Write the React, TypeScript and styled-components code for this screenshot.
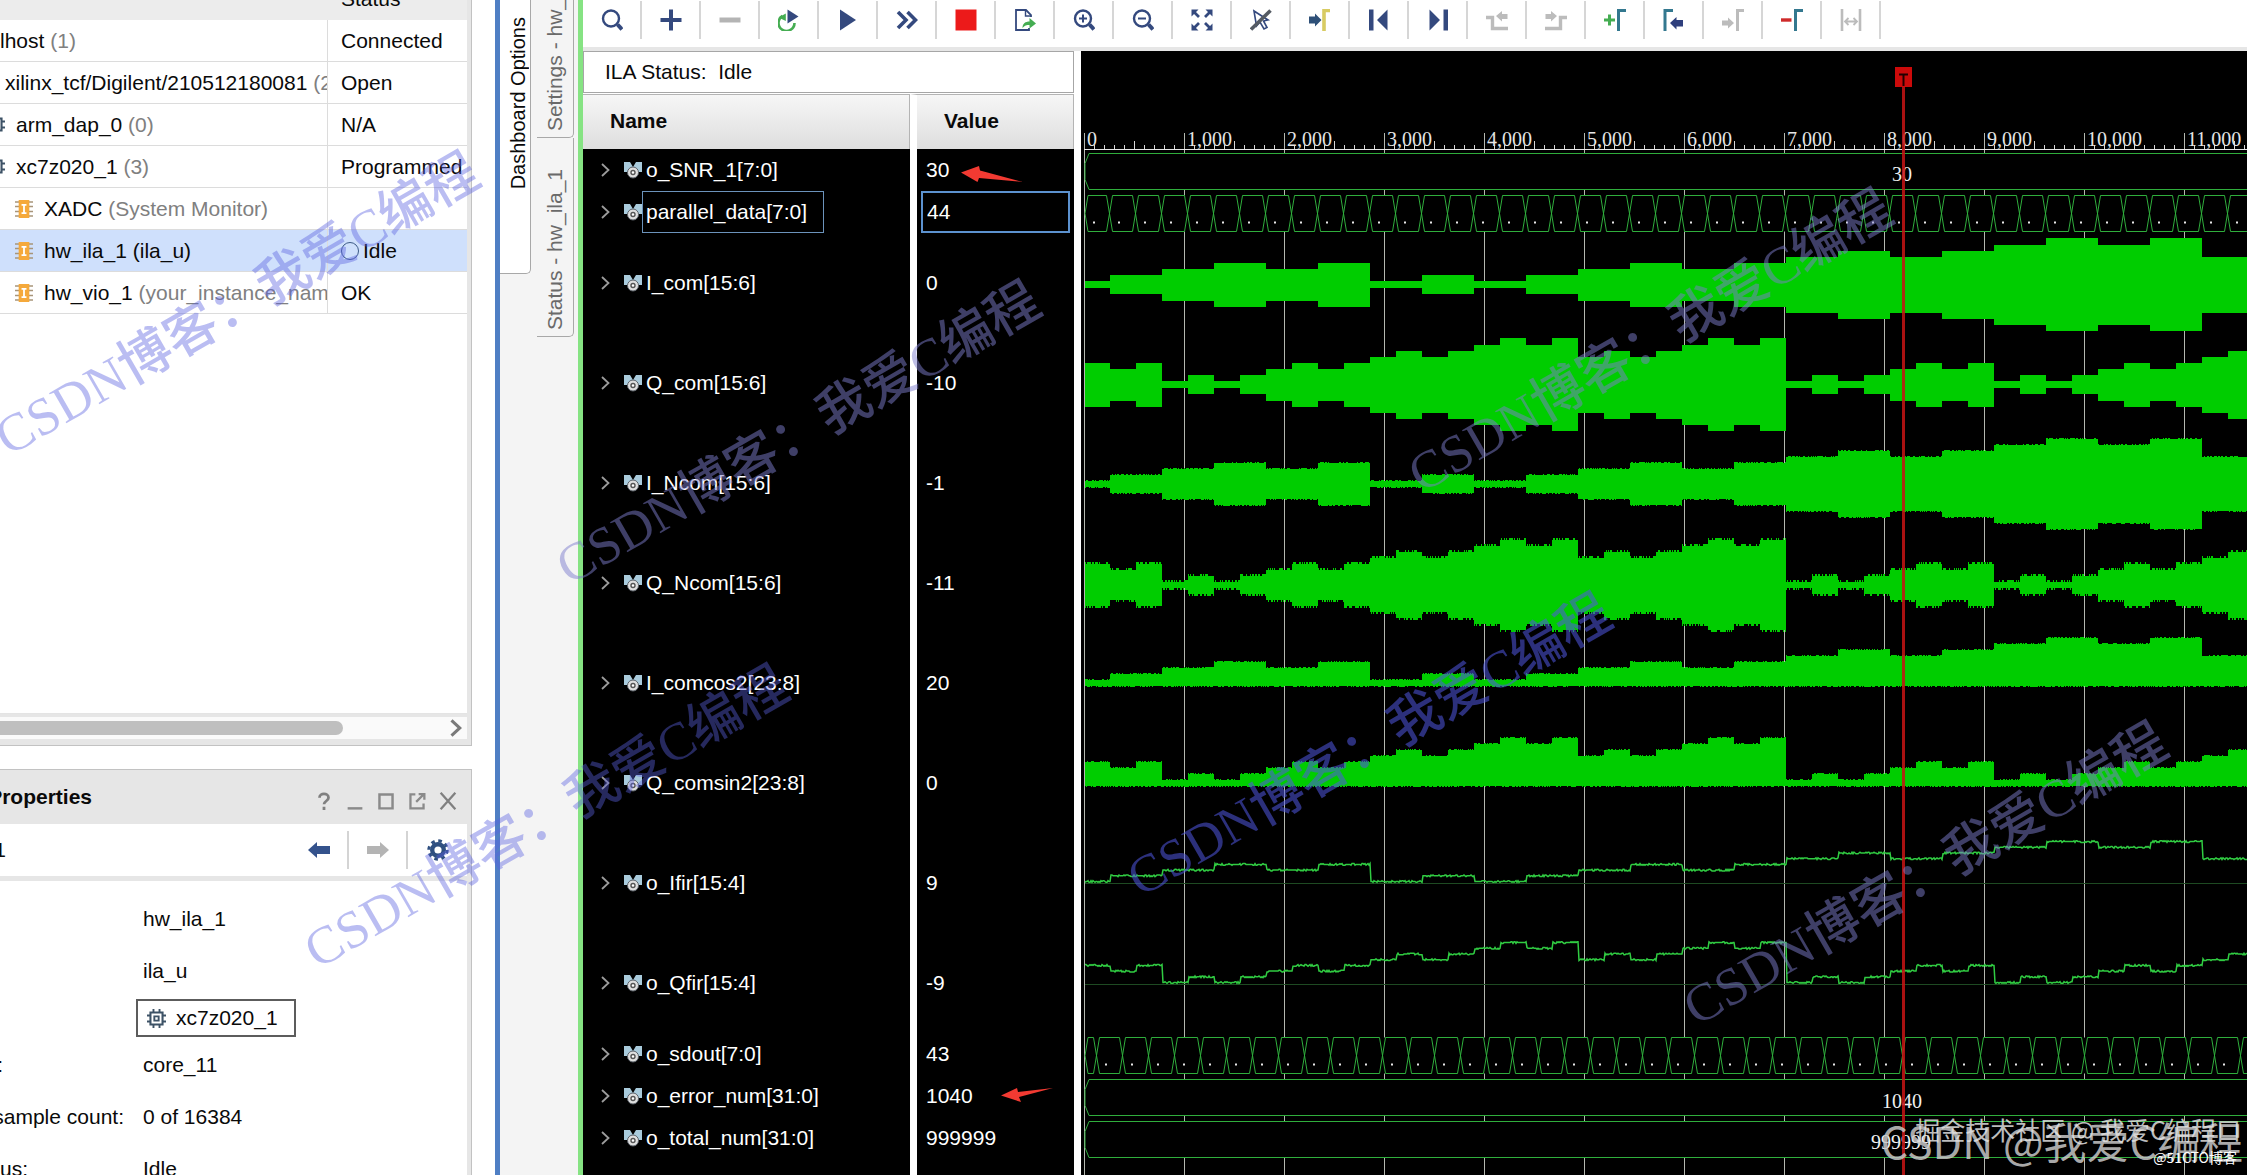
import React from "react";
import styled, { createGlobalStyle } from "styled-components";

const sans = `"Liberation Sans", Arial, "Noto Sans CJK SC", sans-serif`;
const serif = `"Liberation Serif", "Times New Roman", "Noto Sans CJK SC", serif`;
const NAVY = "#34497e";
const TEAL = "#33788f";
const GRAY = "#bcbcbc";
const GREEN = "#00cd00";
const LINE = "#2fae3c";

const GlobalStyle = createGlobalStyle`
  *, *::before, *::after { box-sizing: border-box; }
  body { margin: 0; background: #fff; font: 21px/26px ${sans}; color: #0a0a0a; }
  button, input { font: inherit; color: inherit; }
  svg { flex-shrink: 0; }
`;

/* ---------- page frame ---------- */

const Page = styled.div`
  position: relative;
  display: flex;
  height: 100vh;
  overflow: hidden;
`;

const Dock = styled.aside`
  flex: 0 0 495px;
  display: flex;
  flex-direction: column;
  gap: 23px;
  padding-right: 23px;
  background: #fff;
  overflow: hidden;
`;

const Panel = styled.section<{ $grow?: boolean }>`
  display: flex;
  flex-direction: column;
  flex: ${(p) => (p.$grow ? "1 0 0" : "0 0 746px")};
  min-height: 0;
  overflow: hidden;
  border-right: 1px solid #c2c2c2;
  border-top: ${(p) => (p.$grow ? "1px solid #c2c2c2" : "0")};
  border-bottom: ${(p) => (p.$grow ? "0" : "1px solid #c2c2c2")};
  background: #e6e6e6;
  padding-right: 4px;
  padding-bottom: ${(p) => (p.$grow ? "0" : "6px")};
`;

/* ---------- hardware tree ---------- */

const TreeArea = styled.div`
  flex: 1;
  min-height: 0;
  overflow: hidden;
  background: #fff;
  border-bottom: 1px solid #e4e4e4;
`;

const TreeTable = styled.table`
  width: 100%;
  margin-top: -22px;
  table-layout: fixed;
  border-collapse: separate;
  border-spacing: 0;
`;

const TreeHead = styled.th<{ $w?: number }>`
  height: 42px;
  width: ${(p) => (p.$w ? p.$w + "px" : "auto")};
  padding: 0 0 0 13px;
  text-align: left;
  font-weight: 400;
  background: #ececec;
`;

const TreeRow = styled.tr<{ $selected?: boolean }>`
  background: ${(p) => (p.$selected ? "#cfe0fc" : "#fff")};
`;

const TreeCell = styled.td<{ $name?: boolean }>`
  height: 42px;
  padding: 0 0 0 ${(p) => (p.$name ? "0" : "13px")};
  white-space: nowrap;
  overflow: hidden;
  border-bottom: 1px solid #dcdcdc;
  border-right: ${(p) => (p.$name ? "1px solid #dcdcdc" : "0")};
`;

const NodeLine = styled.div<{ $indent: number }>`
  display: flex;
  align-items: center;
  gap: 11px;
  margin-left: ${(p) => p.$indent}px;
`;

const Muted = styled.span`
  color: #808080;
`;

const IdleState = styled.span`
  display: flex;
  align-items: center;
  gap: 4px;
  &::before {
    content: "";
    width: 18px;
    height: 18px;
    border: 1px solid #3c5a86;
    border-radius: 50%;
  }
`;

const ScrollTrack = styled.div`
  flex: 0 0 22px;
  margin-top: 3px;
  display: flex;
  align-items: center;
  justify-content: space-between;
  padding-right: 5px;
  background: #fafafa;
`;

const ScrollThumb = styled.div`
  width: 343px;
  height: 14px;
  border-radius: 0 7px 7px 0;
  background: #bfbfbf;
`;

const PlainButton = styled.button`
  display: inline-flex;
  align-items: center;
  justify-content: center;
  padding: 0;
  border: 0;
  background: none;
`;

/* ---------- properties panel ---------- */

const PanelTitle = styled.header`
  flex: 0 0 54px;
  display: flex;
  align-items: center;
  justify-content: space-between;
  padding: 0 10px 0 0;
`;

const Clip = styled.span<{ $end: number }>`
  display: flex;
  justify-content: flex-end;
  width: ${(p) => p.$end}px;
  overflow: hidden;
  white-space: nowrap;
`;

const Heading = styled.h2`
  margin: 0;
  font-size: 21px;
  line-height: 26px;
`;

const WindowButtons = styled.div`
  display: flex;
  align-items: center;
  gap: 13px;
  padding-top: 8px;
`;

const PanelBar = styled.div`
  flex: 0 0 52px;
  display: flex;
  align-items: center;
  justify-content: space-between;
  background: #fff;
`;

const BarButtons = styled.div`
  display: flex;
  align-items: center;
`;

const BarButton = styled(PlainButton)<{ $last?: boolean }>`
  width: 59px;
  height: 38px;
  border-right: ${(p) => (p.$last ? "0" : "2px solid #d4d4d4")};
`;

const PropertyList = styled.dl`
  flex: 1;
  margin: 5px 0 0;
  padding-top: 12px;
  background: #fff;
  display: flex;
  flex-direction: column;
`;

const PropertyRow = styled.div<{ $h: number }>`
  flex: 0 0 ${(p) => p.$h}px;
  display: flex;
  align-items: center;
`;

const Term = styled.dt`
  flex: 0 0 143px;
`;

const Detail = styled.dd<{ $boxed?: boolean }>`
  margin: 0 0 0 ${(p) => (p.$boxed ? "-7px" : "0")};
`;

const DeviceButton = styled.button`
  display: flex;
  align-items: center;
  gap: 10px;
  height: 38px;
  padding: 0 16px 0 9px;
  border: 2px solid #5c5c5c;
  background: #fff;
`;

/* ---------- vertical tabs ---------- */

const TabStrip = styled.nav`
  flex: 0 0 88px;
  display: flex;
  align-items: flex-start;
  justify-content: space-between;
  padding-right: 4px;
  background: #f4f4f4;
  border-left: 5px solid #4f7fc4;
  border-right: 5px solid #86e383;
`;

const TabColumn = styled.div`
  display: flex;
  flex-direction: column;
`;

const VerticalTab = styled.button<{ $h: number; $pad: number; $active?: boolean }>`
  display: flex;
  align-items: flex-end;
  justify-content: center;
  width: ${(p) => (p.$active ? 31 : 37)}px;
  height: ${(p) => p.$h}px;
  padding: 0 0 ${(p) => p.$pad}px ${(p) => (p.$active ? 6 : 0)}px;
  overflow: hidden;
  border: 1px solid #a8a8a8;
  border-width: 0 1px 1px 0;
  border-radius: 0 0 5px 0;
  background: ${(p) => (p.$active ? "#fff" : "#f4f4f4")};
  color: ${(p) => (p.$active ? "#0a0a0a" : "#6a6a6a")};
  font-size: ${(p) => (p.$active ? 20 : 21)}px;
  line-height: 24px;
`;

const VerticalText = styled.span`
  writing-mode: vertical-rl;
  transform: rotate(180deg);
  white-space: nowrap;
`;

/* ---------- waveform window ---------- */

const WaveWindow = styled.main`
  flex: 1;
  min-width: 0;
  display: flex;
  flex-direction: column;
  background: #fff;
`;

const Toolbar = styled.div`
  flex: 0 0 51px;
  display: flex;
  padding-top: 1px;
  border-bottom: 4px solid #e6e6e6;
`;

const ToolButton = styled(PlainButton)`
  width: 59px;
  height: 38px;
  border-right: 2px solid #d6d6d6;
`;

const WaveBody = styled.div`
  flex: 1;
  min-height: 0;
  display: flex;
  gap: 7px;
`;

const SignalPane = styled.div`
  flex: 0 0 491px;
  display: flex;
  flex-direction: column;
  overflow: hidden;
`;

const StatusBox = styled.div`
  flex: 0 0 41px;
  margin-bottom: 1px;
  padding-left: 21px;
  border: 1px solid #a6a6a6;
  line-height: 40px;
`;

const SignalTable = styled.table`
  flex: 1;
  width: 491px;
  table-layout: fixed;
  border-collapse: separate;
  border-spacing: 0;
  color: #fff;
  background: #000;
`;

const SignalHead = styled.th<{ $value?: boolean }>`
  height: 55px;
  width: ${(p) => (p.$value ? 164 : 327)}px;
  padding: 0 0 2px 27px;
  text-align: left;
  color: #0a0a0a;
  background: linear-gradient(#f6f6f6, #dedede) padding-box;
  border-top: 1px solid #b4b4b4;
  border-right: 1px solid #b4b4b4;
  border-left: ${(p) => (p.$value ? "7px solid #fff" : "0")};
`;

const SignalCell = styled.td<{ $h?: number; $value?: boolean }>`
  height: ${(p) => (p.$h ? p.$h + "px" : "auto")};
  padding: 0 0 0 ${(p) => (p.$value ? "4px" : "18px")};
  border-left: ${(p) => (p.$value ? "7px solid #fff" : "0")};
`;

const SignalName = styled.div`
  display: flex;
  align-items: center;
  height: 42px;
`;

const ExpandButton = styled(PlainButton)`
  width: 9px;
  margin-right: 14px;
`;

const NameText = styled.span<{ $focus?: boolean }>`
  display: flex;
  align-items: center;
  height: 42px;
  padding: 0 16px 0 3px;
  border: 1px solid ${(p) => (p.$focus ? "#6c93bb" : "transparent")};
`;

const ValueText = styled.span`
  display: block;
  padding-left: 5px;
`;

const ValueInput = styled.input`
  display: block;
  width: 149px;
  height: 42px;
  padding: 0 0 0 4px;
  border: 2px solid #5c92cf;
  border-radius: 0;
  background: #000;
  outline: 0;
`;

const Plot = styled.svg`
  flex: 1;
  min-width: 0;
  height: 100%;
  background: #000;
  font: 20px ${serif};
`;

/* ---------- marks lying over the page ---------- */

const Watermark = styled.span<{ $x: number; $y: number; $tone: string }>`
  position: absolute;
  left: ${(p) => p.$x}px;
  top: ${(p) => p.$y}px;
  transform: translate(-50%, -50%) rotate(-30deg);
  font: 500 53px/60px ${serif};
  white-space: nowrap;
  pointer-events: none;
  color: ${(p) => p.$tone};
`;

const CornerMark = styled.span<{ $size: number; $right: number; $bottom: number; $tone: string }>`
  position: absolute;
  right: ${(p) => p.$right}px;
  bottom: ${(p) => p.$bottom}px;
  font: ${(p) => p.$size}px/1 "Noto Sans CJK SC", sans-serif;
  white-space: nowrap;
  pointer-events: none;
  color: ${(p) => p.$tone};
`;

const Pointer = styled.svg<{ $x: number; $y: number }>`
  position: absolute;
  left: ${(p) => p.$x}px;
  top: ${(p) => p.$y}px;
  pointer-events: none;
`;

/* ---------- icons ---------- */

const Icon = ({ children, size = 22 }: { children: React.ReactNode; size?: number }) => (
  <svg width={size} height={size} viewBox="0 0 22 22" fill="none" aria-hidden="true">
    {children}
  </svg>
);

const Lens = ({ children }: { children?: React.ReactNode }) => (
  <Icon>
    <circle cx="10" cy="9.5" r="8" stroke={NAVY} strokeWidth="2.4" />
    <path d="M16.5 15.5l4.5 5" stroke={NAVY} strokeWidth="4" />
    {children}
  </Icon>
);

const tools: { label: string; icon: React.ReactNode }[] = [
  { label: "Search", icon: <Lens /> },
  { label: "Add", icon: <Icon><path d="M11 .5v21M.5 11h21" stroke={NAVY} strokeWidth="4" /></Icon> },
  { label: "Remove", icon: <Icon><path d="M.5 11h21" stroke="#b4b4b4" strokeWidth="5" /></Icon> },
  {
    label: "Re-trigger",
    icon: (
      <Icon>
        <path d="M4.5 7A8 8 0 1 0 16.5 14" stroke="#45ad52" strokeWidth="2.6" />
        <path d="M.5 8.5L7.8 4.5v7.5z" fill="#45ad52" />
        <path d="M9.5 .5L20.5 7.5 9.5 14.5z" fill={NAVY} />
      </Icon>
    ),
  },
  { label: "Run", icon: <Icon><path d="M3 .5L19 11 3 21.5z" fill={NAVY} /></Icon> },
  { label: "Run immediate", icon: <Icon><path d="M2 3l8 8-8 8M11.5 3l8 8-8 8" stroke={NAVY} strokeWidth="3.6" /></Icon> },
  { label: "Stop", icon: <Icon><path d="M.5 .5h21v21H.5z" fill="#ec1a1a" /></Icon> },
  {
    label: "Export",
    icon: (
      <Icon>
        <path d="M17 8V6l-5-5H2v20h13v-2" stroke={NAVY} strokeWidth="1.8" />
        <path d="M11.5 1v6H17" stroke={NAVY} strokeWidth="1.4" />
        <path d="M8.5 19c0-4.5 3-6.5 7-6.5V9l6.5 5.5-6.5 5V16c-3 0-5 .5-7 3z" fill="#45ad52" />
      </Icon>
    ),
  },
  { label: "Zoom in", icon: <Lens><path d="M10 5.5v8M6 9.5h8" stroke={NAVY} strokeWidth="2" /></Lens> },
  { label: "Zoom out", icon: <Lens><path d="M6 9.5h8" stroke={NAVY} strokeWidth="2" /></Lens> },
  {
    label: "Zoom fit",
    icon: (
      <Icon>
        <path d="M2 2l6 6M20 2l-6 6M2 20l6-6M20 20l-6-6" stroke={NAVY} strokeWidth="2.8" />
        <path d="M.5 .5h7l-7 7zM21.5 .5h-7l7 7zM.5 21.5h7l-7-7zM21.5 21.5h-7l7-7z" fill={NAVY} />
      </Icon>
    ),
  },
  {
    label: "Selection tool",
    icon: (
      <Icon>
        <path d="M4 2l2.5 15 3.5-4 4 7 3-1.5-3.5-6.5 4.5-1z" stroke={NAVY} strokeWidth="1.6" />
        <path d="M1 20.5L20.5 1.5" stroke="#555b63" strokeWidth="3.6" />
      </Icon>
    ),
  },
  {
    label: "Go to cursor",
    icon: (
      <Icon>
        <path d="M0 7.5h6V4.5l6.5 6.5-6.5 6.5v-3H0z" fill="#2e5078" />
        <path d="M15 22V1.5h6" stroke="#d8cb62" strokeWidth="3.6" />
      </Icon>
    ),
  },
  { label: "Go to first", icon: <Icon><path d="M1 .5h4.5v21H1zM19.5 .5v21L9 11z" fill={NAVY} /></Icon> },
  { label: "Go to last", icon: <Icon><path d="M16.5 .5H21v21h-4.5zM2.500 .5v21L13 11z" fill={NAVY} /></Icon> },
  {
    label: "Previous transition",
    icon: (
      <Icon>
        <path d="M0 8.5h6.5v11H22" stroke={GRAY} strokeWidth="3.4" />
        <path d="M10 7l6-5v3h5.5v5H16v2.5z" fill={GRAY} />
      </Icon>
    ),
  },
  {
    label: "Next transition",
    icon: (
      <Icon>
        <path d="M22 8.5h-6.5v11H0" stroke={GRAY} strokeWidth="3.4" />
        <path d="M12 7L6 2v3H.5v5H6v2.5z" fill={GRAY} />
      </Icon>
    ),
  },
  {
    label: "Add marker",
    icon: (
      <Icon>
        <path d="M0 11h11M5.5 5.5v11" stroke="#45ad52" strokeWidth="3" />
        <path d="M14.5 22V1.5H22" stroke={TEAL} strokeWidth="3" />
      </Icon>
    ),
  },
  {
    label: "Previous marker",
    icon: (
      <Icon>
        <path d="M2 22V1.5h8" stroke={TEAL} strokeWidth="3" />
        <path d="M7 14l6.5-6v3H20v6.5h-6.5v3z" fill="#2f3f7d" />
      </Icon>
    ),
  },
  {
    label: "Next marker",
    icon: (
      <Icon>
        <path d="M0 11.5h6V8.5l6 5.5-6 5.5v-3H0z" fill={GRAY} />
        <path d="M15.5 22V1.5H22" stroke={GRAY} strokeWidth="3" />
      </Icon>
    ),
  },
  {
    label: "Remove marker",
    icon: (
      <Icon>
        <path d="M0 11h10.5" stroke="#cf2a2a" strokeWidth="3.4" />
        <path d="M14.5 22V1.5H22" stroke={TEAL} strokeWidth="3" />
      </Icon>
    ),
  },
  {
    label: "Marker span",
    icon: (
      <Icon>
        <path d="M2 0v22M20 0v22" stroke={GRAY} strokeWidth="2.6" />
        <path d="M5 12.5h12M8.5 9L5 12.5 8.5 16M13.5 9l3.5 3.5-3.5 3.5" stroke={GRAY} strokeWidth="1.8" />
      </Icon>
    ),
  },
];

const ChipIcon = () => (
  <Icon size={19}>
    <path d="M4 4h14v14H4z" stroke="#3d5266" strokeWidth="2.4" />
    <path d="M8.5 8.5h5v5h-5z" stroke="#3d5266" strokeWidth="2.2" />
    <path d="M7.5 0v4M14.5 0v4M7.5 18v4M14.5 18v4M0 7.5h4M0 14.5h4M18 7.5h4M18 14.5h4" stroke="#3d5266" strokeWidth="2.2" />
  </Icon>
);

const CoreIcon = () => (
  <Icon size={18}>
    <path d="M0 2.5h22M0 8h22M0 14h22M0 19.5h22" stroke="#a8957a" strokeWidth="1.8" />
    <path d="M4.5 0h13v22h-13z" fill="#f5a93b" />
    <path d="M8 6h6M8 16h6M11 6v10" stroke="#fff" strokeWidth="2.2" />
  </Icon>
);

const BusIcon = () => (
  <svg width="18" height="18" viewBox="0 0 18 18" aria-hidden="true">
    <path d="M0 1h6l3 5 3-5h6v10H0z" fill="#a9cbdc" />
    <circle cx="9" cy="11.5" r="5.5" fill="#dedede" stroke="#5a6068" strokeWidth="1" />
    <circle cx="9" cy="11.5" r="2" fill="#fff" stroke="#555" strokeWidth="1.4" />
  </svg>
);

const Chevron = ({ w = 9, h = 14, color = "#9c9c9c", stroke = 1.8 }) => (
  <svg width={w} height={h} viewBox="0 0 9 14" fill="none" aria-hidden="true">
    <path d="M1 1l6.5 6L1 13" stroke={color} strokeWidth={stroke} />
  </svg>
);

/* ---------- waveform data ---------- */

const ORIGIN = 4;
const END = 3000;
const I_LEVELS = [0, 1, 2, 3, 2, 3, 0, 1, 0, 1, 2, 3, 2, 3, 4, 5, 4, 5, 6, 7, 6, 7, 4, 5, 4, 5];
const Q_LEVELS = [
  3, 2, 3, 0, 1, 0, 1, 2, 3, 2, 3, 4, 5, 4, 5, 6, 7, 6, 7, 4, 5, 4, 5, 6, 7, 6, 7,
  0, 1, 0, 1, 2, 3, 2, 3, 0, 1, 0, 1, 2, 3, 2, 3, 4, 5, 4, 5, 6, 7,
];

const levelAt = (levels: number[], step: number, x: number) =>
  levels[Math.min(levels.length - 1, Math.max(0, Math.floor((x - 29) / step) + 1))];

const jitter = (x: number, seed: number) => {
  const v = Math.sin(x * 12.9898 + seed * 78.233) * 43758.5453;
  return v - Math.floor(v);
};

/* Filled envelope: `up` and `down` give the edge distance from `mid` for a level. */
const envelope = (
  levels: number[],
  step: number,
  mid: number,
  up: (l: number) => number,
  down: (l: number) => number,
  noise: number,
  seed: number
) => {
  const top: string[] = [];
  const bottom: string[] = [];
  for (let x = ORIGIN; x < 1300; x++) {
    const l = levelAt(levels, step, x);
    const a = noise && jitter(x, seed) > 0.55 ? noise : 0;
    const b = noise && jitter(x, seed + 5) > 0.55 ? noise : 0;
    const t = mid - up(l) - a;
    const d = mid + down(l) + b;
    top.push(`${x} ${t}L${x + 1} ${t}`);
    bottom.unshift(`${x + 1} ${d}L${x} ${d}`);
  }
  return `M${top.join("L")}L${bottom.join("L")}Z`;
};

const trace = (levels: number[], step: number, base: number, seed: number) => {
  const pts: string[] = [];
  for (let x = ORIGIN; x < 1300; x++) {
    const l = levelAt(levels, step, x - 1);
    const n = Math.round(jitter(x, seed) * 2 - 1) * 0.8;
    pts.push(`${x} ${base - l * 5.7 + n}`);
  }
  return `M${pts.join("L")}`;
};

const half = (l: number) => 3.6 + l * 6.1;
const halfSoft = (l: number) => 3 + l * 6;
const rise = (l: number) => 5.5 + l * 6;
const flat = () => 0;

const fills = [
  envelope(I_LEVELS, 52, 233.7, half, half, 0, 0),
  envelope(Q_LEVELS, 26, 333.7, half, half, 0, 0),
  envelope(I_LEVELS, 52, 433.4, halfSoft, halfSoft, 1, 1),
  envelope(Q_LEVELS, 26, 534.4, halfSoft, halfSoft, 2, 2),
  envelope(I_LEVELS, 52, 634.5, rise, flat, 1, 3),
  envelope(Q_LEVELS, 26, 734.5, rise, flat, 1, 4),
];

const hexRow = (first: number, y: number) => {
  const edges: number[] = [];
  for (let x = first; x < 1300; x += 26) edges.push(x);
  let d = `M${edges[0] - 3} ${y}H7L${ORIGIN} ${y + 18}L7 ${y + 36}H${edges[0] - 3}`;
  edges.forEach((x) => {
    d += `M${x - 3} ${y}L${x + 3} ${y + 36}H${x + 23}M${x - 3} ${y + 36}L${x + 3} ${y}H${x + 23}`;
  });
  return { d, edges };
};

const busShape = (y: number) => `M${END} ${y}H8L${ORIGIN} ${y + 10}V${y + 26}L8 ${y + 36}H${END}`;

const ticks = () => {
  let d = "";
  for (let i = 1; i < 130; i++) {
    if (i % 10 === 0) continue;
    d += `M${3.5 + i * 10} ${i % 5 === 0 ? 90 : 94}V98`;
  }
  return d;
};

const HexBus = ({ first, y }: { first: number; y: number }) => {
  const { d, edges } = hexRow(first, y);
  return (
    <g>
      <path d={`M${ORIGIN} ${y}H1300V${y + 36}H${ORIGIN}Z`} fill="#000" />
      <path d={d} fill="none" stroke={LINE} />
      {edges.map((x) => (
        <rect key={x} x={Math.round(x + 8)} y={y + 26} width="2" height="2" fill="#e8e8e8" />
      ))}
      {first > 20 && <rect x="12" y={y + 26} width="2" height="2" fill="#e8e8e8" />}
    </g>
  );
};

const WavePlot = () => (
  <Plot role="img" aria-label="Captured waveform">
    <path d={Array.from({ length: 13 }, (_, i) => `M${3.5 + i * 100} 82V2000`).join("")} stroke="#b4b8b0" />
    <path d={ticks()} stroke="#d8d8d8" />
    <path d={`M3 98.5H${END}`} stroke="#e8e8e8" />
    {Array.from({ length: 13 }, (_, i) => (
      <text key={i} x={6 + i * 100} y="95" fill="#e6e6e6">
        {i === 0 ? "0" : `${i},000`}
      </text>
    ))}

    <path d={busShape(102.5)} fill="#000" stroke={LINE} />
    <HexBus first={28.5} y={144.5} />
    {fills.map((d, i) => (
      <path key={i} d={d} fill={GREEN} shapeRendering="crispEdges" />
    ))}

    <path d={`M4 832.5H${END}M4 933.5H${END}`} stroke="#1e4a22" />
    <path d={trace(I_LEVELS, 52, 830.5, 7)} fill="none" stroke="#30cc42" strokeWidth="1.5" />
    <path d={trace(Q_LEVELS, 26, 931.5, 8)} fill="none" stroke="#30cc42" strokeWidth="1.5" />

    <HexBus first={15.5} y={986.5} />
    <path d={busShape(1028.5)} fill="#000" stroke={LINE} />
    <path d={busShape(1070.5)} fill="#000" stroke={LINE} />

    <g fill="#f0f0f0" textAnchor="middle">
      <text x="821" y="130">30</text>
      <text x="821" y="1057">1040</text>
      <text x="820" y="1098">999999</text>
    </g>

    <path d="M822.5 36V2000" stroke="#c81414" strokeWidth="3" opacity="0.85" />
    <rect x="814" y="16" width="17" height="20" fill="#cc0a0a" />
    <path d="M818 23.5h9M822.5 23v12" stroke="#200" strokeWidth="2" />
  </Plot>
);

/* ---------- content ---------- */

const nodes = [
  { indent: 0, name: "lhost", note: "(1)", status: "Connected" },
  { indent: 5, name: "xilinx_tcf/Digilent/210512180081", note: "(2)", status: "Open" },
  { indent: -14, icon: <ChipIcon />, name: "arm_dap_0", note: "(0)", status: "N/A" },
  { indent: -14, icon: <ChipIcon />, name: "xc7z020_1", note: "(3)", status: "Programmed" },
  { indent: 15, icon: <CoreIcon />, name: "XADC", note: "(System Monitor)", status: "" },
  { indent: 15, icon: <CoreIcon />, name: "hw_ila_1 (ila_u)", note: "", status: "Idle", selected: true },
  { indent: 15, icon: <CoreIcon />, name: "hw_vio_1", note: "(your_instance_name)", status: "OK" },
];

const signals = [
  { name: "o_SNR_1[7:0]", value: "30", h: 42 },
  { name: "parallel_data[7:0]", value: "44", h: 42, focus: true },
  { name: "I_com[15:6]", value: "0", h: 100 },
  { name: "Q_com[15:6]", value: "-10", h: 100 },
  { name: "I_Ncom[15:6]", value: "-1", h: 100 },
  { name: "Q_Ncom[15:6]", value: "-11", h: 100 },
  { name: "I_comcos2[23:8]", value: "20", h: 100 },
  { name: "Q_comsin2[23:8]", value: "0", h: 100 },
  { name: "o_Ifir[15:4]", value: "9", h: 100 },
  { name: "o_Qfir[15:4]", value: "-9", h: 100 },
  { name: "o_sdout[7:0]", value: "43", h: 42 },
  { name: "o_error_num[31:0]", value: "1040", h: 42 },
  { name: "o_total_num[31:0]", value: "999999", h: 42 },
];

const BLUE_MARK = "rgba(90, 98, 225, 0.42)";
const DIM_MARK = "rgba(125, 125, 205, 0.5)";

const watermarks = [
  { x: 237, y: 304, tone: BLUE_MARK },
  { x: 546, y: 817, tone: BLUE_MARK },
  { x: 798, y: 433, tone: DIM_MARK },
  { x: 1369, y: 745, tone: "rgba(80, 88, 225, 0.55)" },
  { x: 1650, y: 341, tone: DIM_MARK },
  { x: 1925, y: 874, tone: DIM_MARK },
];

const HardwarePanel = () => (
  <Panel>
    <TreeArea>
      <TreeTable>
        <thead>
          <tr>
            <TreeHead $w={328} aria-label="Name" />
            <TreeHead>Status</TreeHead>
          </tr>
        </thead>
        <tbody>
          {nodes.map((n) => (
            <TreeRow key={n.name} $selected={n.selected}>
              <TreeCell $name>
                <NodeLine $indent={n.indent}>
                  {n.icon}
                  <span>
                    {n.name} {n.note && <Muted>{n.note}</Muted>}
                  </span>
                </NodeLine>
              </TreeCell>
              <TreeCell>{n.selected ? <IdleState>{n.status}</IdleState> : n.status}</TreeCell>
            </TreeRow>
          ))}
        </tbody>
      </TreeTable>
    </TreeArea>
    <ScrollTrack>
      <ScrollThumb />
      <PlainButton aria-label="Scroll right">
        <Chevron w={12} h={18} color="#7a7a7a" stroke={2.4} />
      </PlainButton>
    </ScrollTrack>
  </Panel>
);

const PropertiesPanel = () => (
  <Panel $grow>
    <PanelTitle>
      <Clip $end={92}>
        <Heading>Properties</Heading>
      </Clip>
      <WindowButtons>
        <PlainButton aria-label="Help">
          <Icon size={18}><path d="M5.500 7C5.500 .8 16.500 .8 16.500 7c0 4-5.500 4-5.500 8M11 18v4" stroke="#808080" strokeWidth="3.4" /></Icon>
        </PlainButton>
        <PlainButton aria-label="Minimize">
          <Icon size={18}><path d="M2 20h18" stroke="#8a8a8a" strokeWidth="3" /></Icon>
        </PlainButton>
        <PlainButton aria-label="Maximize">
          <Icon size={18}><path d="M3 3h16v17H3z" stroke="#8a8a8a" strokeWidth="3" /></Icon>
        </PlainButton>
        <PlainButton aria-label="Float">
          <Icon size={18}><path d="M9 3H3v17h16v-6M10 12l9-9M13 2.5h7v7" stroke="#8a8a8a" strokeWidth="2.8" /></Icon>
        </PlainButton>
        <PlainButton aria-label="Close">
          <Icon size={18}><path d="M2 1l18 20M20 1L2 21" stroke="#808080" strokeWidth="2.8" /></Icon>
        </PlainButton>
      </WindowButtons>
    </PanelTitle>
    <PanelBar>
      <Clip $end={6}>1</Clip>
      <BarButtons>
        <BarButton aria-label="Back">
          <Icon><path d="M0 11l9-8v4h13v8H9v4z" fill="#34528c" /></Icon>
        </BarButton>
        <BarButton aria-label="Forward">
          <Icon><path d="M22 11l-9-8v4H0v8h13v4z" fill="#b4b4b4" /></Icon>
        </BarButton>
        <BarButton aria-label="Settings" $last>
          <Icon>
            <circle cx="11" cy="11" r="5.8" stroke="#2f4f80" strokeWidth="4.4" />
            <circle cx="11" cy="11" r="9.2" stroke="#2f4f80" strokeWidth="3" strokeDasharray="3.6 3.625" />
          </Icon>
        </BarButton>
      </BarButtons>
    </PanelBar>
    <PropertyList>
      <PropertyRow $h={52}><Term /><Detail>hw_ila_1</Detail></PropertyRow>
      <PropertyRow $h={52}><Term /><Detail>ila_u</Detail></PropertyRow>
      <PropertyRow $h={42}>
        <Term />
        <Detail $boxed><DeviceButton><ChipIcon />xc7z020_1</DeviceButton></Detail>
      </PropertyRow>
      <PropertyRow $h={52}><Term><Clip $end={3}>:</Clip></Term><Detail>core_11</Detail></PropertyRow>
      <PropertyRow $h={52}><Term><Clip $end={124}>sample count:</Clip></Term><Detail>0 of 16384</Detail></PropertyRow>
      <PropertyRow $h={52}><Term><Clip $end={28}>us:</Clip></Term><Detail>Idle</Detail></PropertyRow>
    </PropertyList>
  </Panel>
);

export default function App() {
  return (
    <Page>
      <GlobalStyle />
      <Dock>
        <HardwarePanel />
        <PropertiesPanel />
      </Dock>

      <TabStrip>
        <VerticalTab $active $h={274} $pad={84}><VerticalText>Dashboard Options</VerticalText></VerticalTab>
        <TabColumn>
          <VerticalTab $h={138} $pad={6}><VerticalText>Settings - hw_</VerticalText></VerticalTab>
          <VerticalTab $h={199} $pad={6}><VerticalText>Status - hw_ila_1</VerticalText></VerticalTab>
        </TabColumn>
      </TabStrip>

      <WaveWindow>
        <Toolbar role="toolbar">
          {tools.map((t) => (
            <ToolButton key={t.label} aria-label={t.label}>{t.icon}</ToolButton>
          ))}
        </Toolbar>
        <WaveBody>
          <SignalPane>
            <StatusBox>ILA Status: &nbsp;Idle</StatusBox>
            <SignalTable>
              <thead>
                <tr>
                  <SignalHead>Name</SignalHead>
                  <SignalHead $value>Value</SignalHead>
                </tr>
              </thead>
              <tbody>
                {signals.map((s) => (
                  <tr key={s.name}>
                    <SignalCell $h={s.h}>
                      <SignalName>
                        <ExpandButton aria-label={`Expand ${s.name}`}>
                          <Chevron />
                        </ExpandButton>
                        <BusIcon />
                        <NameText $focus={s.focus}>{s.name}</NameText>
                      </SignalName>
                    </SignalCell>
                    <SignalCell $h={s.h} $value>
                      {s.focus ? (
                        <ValueInput aria-label={`${s.name} value`} defaultValue={s.value} />
                      ) : (
                        <ValueText>{s.value}</ValueText>
                      )}
                    </SignalCell>
                  </tr>
                ))}
                <tr>
                  <SignalCell />
                  <SignalCell $value />
                </tr>
              </tbody>
            </SignalTable>
          </SignalPane>
          <WavePlot />
        </WaveBody>
      </WaveWindow>

      <Pointer $x={961} $y={164} width="64" height="22" viewBox="0 0 64 22" aria-hidden="true">
        <path d="M0 8.500L18 2l1 4.500L62 18 18 14l-1.500 4z" fill="#f23a32" />
      </Pointer>
      <Pointer $x={1001} $y={1085} width="54" height="20" viewBox="0 0 54 20" aria-hidden="true">
        <path d="M0 10.500L16 3l1 4L52 3 18 12l2 5z" fill="#f23a32" />
      </Pointer>

      {watermarks.map((w) => (
        <Watermark key={w.x} $x={w.x} $y={w.y} $tone={w.tone}>CSDN博客：我爱C编程</Watermark>
      ))}
      <CornerMark $size={43} $right={4} $bottom={13} $tone="rgba(200, 200, 200, 0.85)">CSDN @我爱C编程</CornerMark>
      <CornerMark $size={25} $right={6} $bottom={33} $tone="rgba(225, 225, 225, 0.85)">掘金技术社区 @ 我爱C编程口</CornerMark>
      <CornerMark $size={14} $right={10} $bottom={11} $tone="#fff">@51CTO博客</CornerMark>
    </Page>
  );
}
